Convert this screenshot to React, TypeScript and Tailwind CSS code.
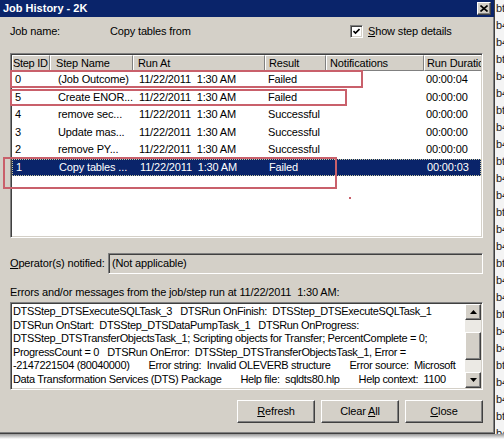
import React from 'react';

const COLS = [
  { head: 'Step ID', w: 'w-[38px]', hp: 'pl-0 tracking-[-0.3px]', rp: 'pl-[3px]' },
  { head: 'Step Name', w: 'w-[83px]', hp: 'pl-[5px]', rp: 'pl-[8px]' },
  { head: 'Run At', w: 'w-[132px]', hp: 'pl-[4px]', rp: 'pl-[6px]' },
  { head: 'Result', w: 'w-[61px]', hp: 'pl-[3px]', rp: 'pl-[3px]' },
  { head: 'Notifications', w: 'w-[98px]', hp: 'pl-[3px]', rp: 'pl-[3px]' },
  { head: 'Run Duration', w: 'w-[120px]', hp: 'pl-[2px]', rp: 'pl-[2px]' },
];

const ROWS = [
  { cells: ['0', '(Job Outcome)', '11/22/2011  1:30 AM', 'Failed', '', '00:00:04'] },
  { cells: ['5', 'Create ENOR...', '11/22/2011  1:30 AM', 'Failed', '', '00:00:00'] },
  { cells: ['4', 'remove sec...', '11/22/2011  1:30 AM', 'Successful', '', '00:00:00'] },
  { cells: ['3', 'Update mas...', '11/22/2011  1:30 AM', 'Successful', '', '00:00:00'] },
  { cells: ['2', 'remove PY...', '11/22/2011  1:30 AM', 'Successful', '', '00:00:00'] },
  { cells: ['1', 'Copy tables ...', '11/22/2011  1:30 AM', 'Failed', '', '00:00:03'], selected: true },
];

const MESSAGES = [
  'DTSStep_DTSExecuteSQLTask_3   DTSRun OnFinish:  DTSStep_DTSExecuteSQLTask_1',
  'DTSRun OnStart:  DTSStep_DTSDataPumpTask_1   DTSRun OnProgress:',
  'DTSStep_DTSTransferObjectsTask_1; Scripting objects for Transfer; PercentComplete = 0;',
  'ProgressCount = 0   DTSRun OnError:  DTSStep_DTSTransferObjectsTask_1, Error =',
  '-2147221504 (80040000)       Error string:  Invalid OLEVERB structure       Error source:  Microsoft',
  'Data Transformation Services (DTS) Package       Help file:  sqldts80.hlp       Help context:  1100',
];

const raised =
  'border border-t-white border-l-white border-r-[#404040] border-b-[#404040] shadow-[inset_-1px_-1px_0_#808080]';
const sunken =
  'border border-t-[#808080] border-l-[#808080] border-r-white border-b-white shadow-[inset_1px_1px_0_#404040,inset_-1px_-1px_0_#d4d0c8]';

function Arrow({ down }: { down?: boolean }) {
  return (
    <svg width="7" height="4" viewBox="0 0 7 4">
      <path d={down ? 'M0 0h7L3.5 4z' : 'M3.5 0L7 4H0z'} fill="#000" />
    </svg>
  );
}

function Button({ label, mn }: { label: string; mn: number }) {
  return (
    <button className={`flex h-[23px] w-[78px] items-center justify-center bg-[#d4d0c8] ${raised}`}>
      <span className="whitespace-pre">
        {label.slice(0, mn)}
        <span className="underline underline-offset-1">{label[mn]}</span>
        {label.slice(mn + 1)}
      </span>
    </button>
  );
}

export default function App() {
  return (
    <div className="relative h-[439px] w-[504px] overflow-hidden bg-white font-['Liberation_Sans',Arial,sans-serif] text-[11px] leading-none tracking-[-0.15px] text-black">
      <div className="flex h-[434px]">
        {/* Dialog */}
        <div className="flex h-full w-[495px] flex-col border-r border-b border-r-[#404040] border-b-[#404040] bg-[#d4d0c8] shadow-[inset_-1px_-1px_0_#808080]">
          {/* Title bar */}
          <div className="flex h-[17px] items-center justify-between bg-[#0a246a] pr-[3px] pl-[3px]">
            <span className="text-[11px] font-bold tracking-normal text-white">Job History - 2K</span>
            <div className={`flex h-[13px] w-[14px] items-center justify-center bg-[#d4d0c8] ${raised}`}>
              <svg width="8" height="7" viewBox="0 0 8 7">
                <path d="M0.5 0.5L7.5 6.5M7.5 0.5L0.5 6.5" stroke="#000" strokeWidth="1.6" />
              </svg>
            </div>
          </div>

          <div className="flex flex-col pl-[10px]">
            {/* Job name row */}
            <div className="mt-[7px] flex h-[14px] items-center">
              <span className="w-[100px]">Job name:</span>
              <span className="w-[240px]">Copy tables from</span>
              <div className={`flex h-[13px] w-[13px] items-center justify-center bg-white ${sunken}`}>
                <svg width="7" height="7" viewBox="0 0 7 7">
                  <path d="M0.5 3L2.5 5L6.5 1" stroke="#000" strokeWidth="1.6" fill="none" />
                </svg>
              </div>
              <span className="ml-[5px]">
                <span className="underline underline-offset-1">S</span>how step details
              </span>
            </div>

            {/* List view */}
            <div className={`mt-[15px] flex h-[185px] w-[473px] flex-col overflow-hidden bg-white ${sunken} p-px`}>
              <div className="flex h-[16px] shrink-0 overflow-hidden">
                {COLS.map((c) => (
                  <div
                    key={c.head}
                    className={`flex h-full shrink-0 items-center overflow-hidden whitespace-nowrap bg-[#d4d0c8] ${c.w} ${c.hp} border-t border-l border-t-white border-l-white border-r border-b border-r-[#808080] border-b-[#808080]`}
                  >
                    {c.head}
                  </div>
                ))}
              </div>
              {ROWS.map((r, i) => (
                <div
                  key={i}
                  className={`flex h-[17.5px] shrink-0 items-center overflow-hidden ${
                    r.selected ? 'border border-dotted border-[#c8c8a0] bg-[#0a246a] text-white' : ''
                  }`}
                >
                  {r.cells.map((t, j) => (
                    <div key={j} className={`shrink-0 whitespace-pre ${COLS[j].w} ${COLS[j].rp}`}>
                      {t}
                    </div>
                  ))}
                </div>
              ))}
            </div>

            {/* Operators */}
            <div className="mt-[15px] flex h-[21px] w-[473px] items-center">
              <span className="w-[98px]">
                <span className="underline underline-offset-1">O</span>perator(s) notified:
              </span>
              <div className={`flex h-full flex-1 items-center bg-[#d4d0c8] pl-[3px] ${sunken}`}>(Not applicable)</div>
            </div>

            <div className="mt-[11px] flex h-[14px] items-center whitespace-pre">
              Errors and/or messages from the job/step run at 11/22/2011  1:30 AM:
            </div>

            {/* Messages */}
            <div className={`mt-[3px] flex h-[88px] w-[473px] bg-white ${sunken} p-px`}>
              <div className="flex-1 overflow-hidden pt-[1px] pl-px leading-[13.6px] tracking-[-0.35px]">
                {MESSAGES.map((m, i) => (
                  <div key={i} className="whitespace-pre">
                    {m}
                  </div>
                ))}
              </div>
              <div className="flex w-[16px] flex-col bg-[#ebe9e4]">
                <div className={`flex h-[16px] items-center justify-center bg-[#d4d0c8] ${raised}`}>
                  <Arrow />
                </div>
                <div className="flex-1">
                  <div className={`mt-[12px] h-[28px] bg-[#d4d0c8] ${raised}`} />
                </div>
                <div className={`flex h-[16px] items-center justify-center bg-[#d4d0c8] ${raised}`}>
                  <Arrow down />
                </div>
              </div>
            </div>

            {/* Buttons */}
            <div className="mt-[10px] flex w-[473px] justify-end gap-[6px]">
              <Button label="Refresh" mn={0} />
              <Button label="Clear All" mn={6} />
              <Button label="Close" mn={0} />
            </div>
          </div>
        </div>

        {/* Background window strip */}
        <div className="flex flex-1 flex-col overflow-hidden bg-[#f4f4f4] pl-[1px] leading-[17px] text-[#222]">
          {Array.from({ length: 26 }).map((_, i) => (
            <span key={i} className="whitespace-nowrap">
              {i % 3 === 0 ? 'bt' : 'b4'}
            </span>
          ))}
        </div>
      </div>
      <div className="h-[5px] bg-gradient-to-b from-[#9a9a9a] to-white" />

      {/* Red annotation boxes */}
      <div className="absolute top-[70px] left-[10px] h-[18px] w-[353px] border-2 border-[#c9606b]" />
      <div className="absolute top-[89px] left-[10px] h-[17px] w-[337px] border-2 border-[#c9606b]" />
      <div className="absolute top-[157px] left-[3px] h-[32px] w-[334px] border-2 border-[#c9606b]" />
      <div className="absolute top-[197px] left-[349px] h-[2px] w-[2px] bg-[#c9606b]" />
    </div>
  );
}
